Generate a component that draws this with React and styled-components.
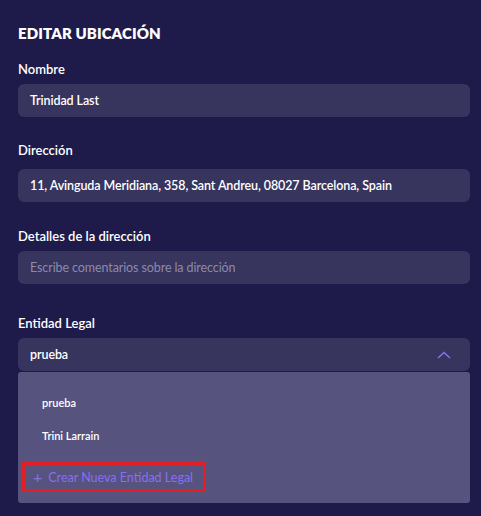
import React from 'react';
import styled, { createGlobalStyle } from 'styled-components';

const Global = createGlobalStyle`
  body {
    margin: 0;
    background: #1e1b4a;
    font-family: Lato, "Noto Sans", sans-serif;
  }
`;

const Page = styled.div`
  width: 481px;
  height: 516px;
  box-sizing: border-box;
  padding: 24px 11px 0 18px;
  background: #1e1b4a;
  overflow: hidden;
`;

const Title = styled.h1`
  margin: 0 0 19px;
  font-size: 15px;
  line-height: 18px;
  font-weight: 800;
  color: #ffffff;
  letter-spacing: 0.1px;
`;

const Field = styled.div`
  margin-bottom: ${p => p.gap || 25}px;
`;

const Label = styled.label`
  display: block;
  font-size: 13px;
  line-height: 16px;
  font-weight: 600;
  color: #ffffff;
  margin-bottom: ${p => p.gap || 7}px;
`;

const Input = styled.div`
  height: 33px;
  box-sizing: border-box;
  padding: 0 12px;
  display: flex;
  align-items: center;
  justify-content: space-between;
  border-radius: 6px;
  background: #37345e;
  font-size: 12.5px;
  letter-spacing: -0.1px;
  color: ${p => (p.placeholder ? '#8c8aab' : '#ffffff')};
  font-weight: ${p => (p.placeholder ? 400 : 600)};
`;

const Chevron = styled.svg`
  width: 14px;
  height: 8px;
  margin-right: 7px;
`;

const Menu = styled.div`
  margin-top: 1px;
  background: #56537f;
  border-radius: 3px;
  padding: 14px 0 11px 4px;
`;

const Option = styled.div`
  height: 33px;
  display: flex;
  align-items: center;
  padding-left: 20px;
  font-size: 11px;
  font-weight: 600;
  color: #ffffff;
`;

const CreateButton = styled.button`
  margin-top: 10px;
  width: 184px;
  height: 30px;
  box-sizing: border-box;
  display: flex;
  align-items: center;
  gap: 6px;
  padding: 0 0 0 8px;
  border: 3px solid #e31e24;
  background: transparent;
  font-family: inherit;
  font-size: 12.5px;
  color: #8b6df0;
  cursor: pointer;
`;

const Plus = styled.span`
  font-size: 16px;
  line-height: 1;
  color: #8574dc;
  font-weight: 400;
`;

export default function App() {
  return (
    <Page>
      <Global />
      <Title>EDITAR UBICACIÓN</Title>
      <Field gap={25}>
        <Label>Nombre</Label>
        <Input>Trinidad Last</Input>
      </Field>
      <Field gap={26}>
        <Label gap={11}>Dirección</Label>
        <Input>11, Avinguda Meridiana, 358, Sant Andreu, 08027 Barcelona, Spain</Input>
      </Field>
      <Field gap={31}>
        <Label>Detalles de la dirección</Label>
        <Input placeholder>Escribe comentarios sobre la dirección</Input>
      </Field>
      <Field>
        <Label>Entidad Legal</Label>
        <Input>
          prueba
          <Chevron viewBox="0 0 14 8">
            <path d="M1 7 L7 1.5 L13 7" fill="none" stroke="#8b6df0" strokeWidth="1.6" />
          </Chevron>
        </Input>
        <Menu>
          <Option>prueba</Option>
          <Option>Trini Larrain</Option>
          <CreateButton>
            <Plus>+</Plus>
            Crear Nueva Entidad Legal
          </CreateButton>
        </Menu>
      </Field>
    </Page>
  );
}
